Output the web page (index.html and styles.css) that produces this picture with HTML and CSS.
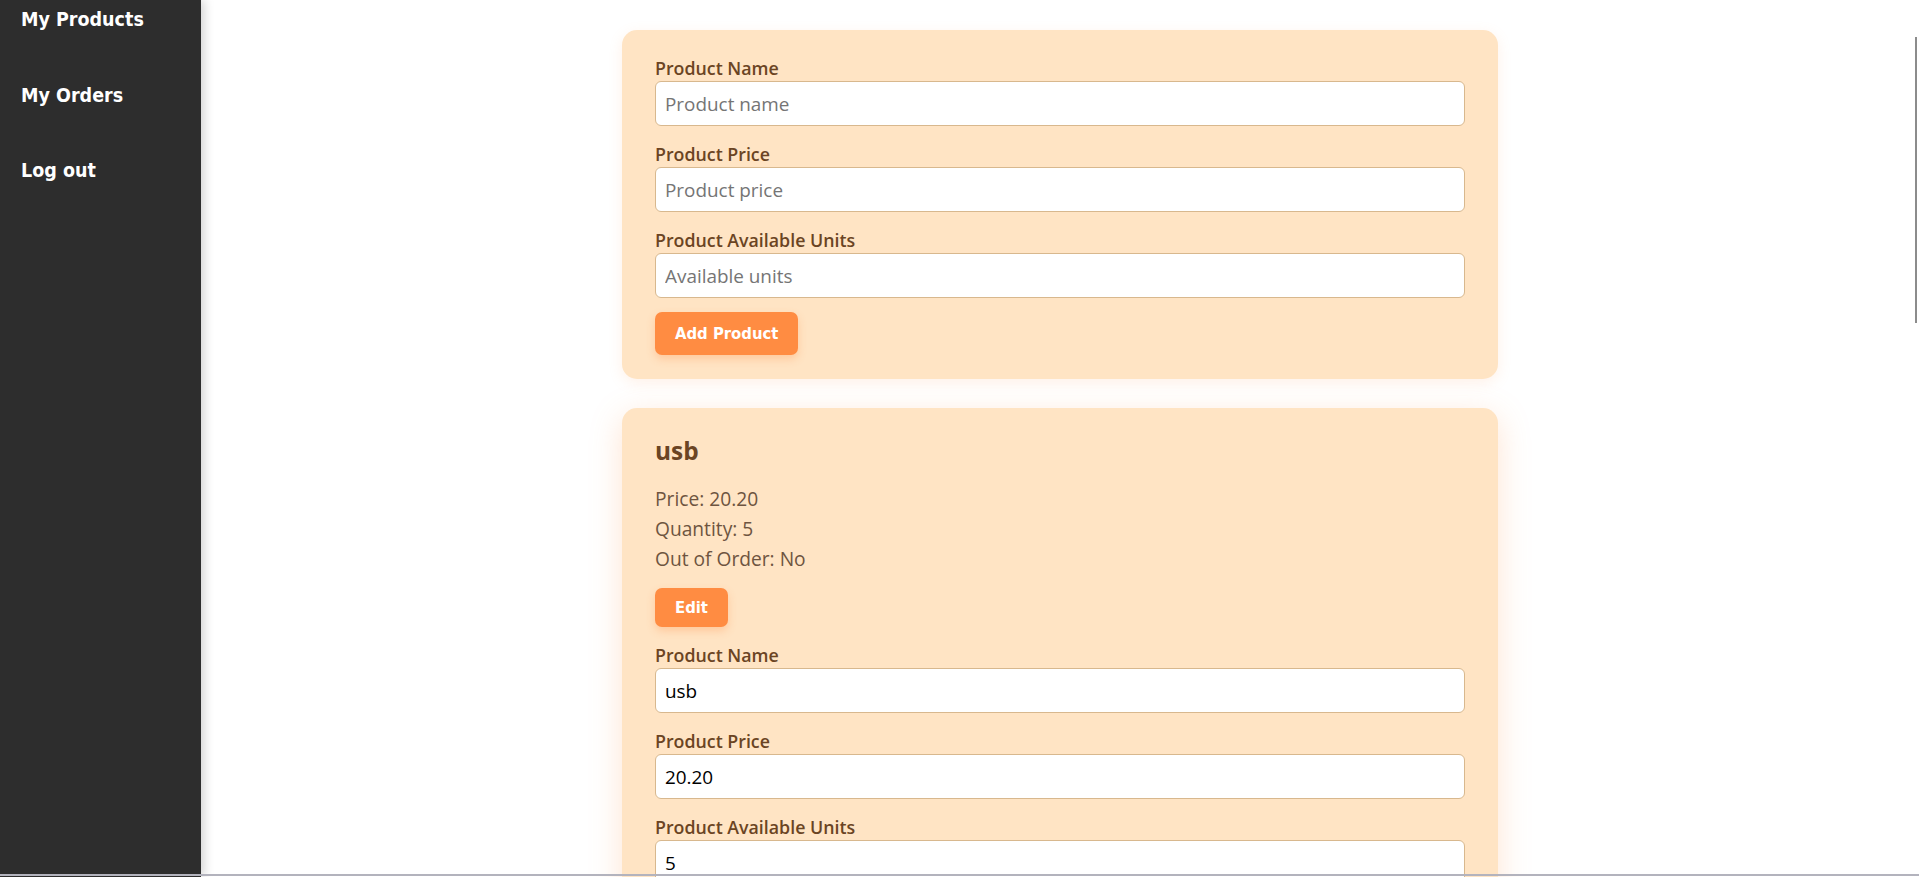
FILE: index.html
```html
<!DOCTYPE html>
<html lang="en">
<head>
<meta charset="utf-8">
<title>My Products</title>
<link rel="stylesheet" href="styles.css">
</head>
<body>
<div class="app">
  <aside class="sidebar">
    <nav class="nav">
      <a class="nav-link" href="#">My Products</a>
      <a class="nav-link" href="#">My Orders</a>
      <a class="nav-link" href="#">Log out</a>
    </nav>
  </aside>
  <main class="main">
    <form class="card">
      <div class="field">
        <label class="label">Product Name</label>
        <input class="input" type="text" placeholder="Product name">
      </div>
      <div class="field">
        <label class="label">Product Price</label>
        <input class="input" type="text" placeholder="Product price">
      </div>
      <div class="field last">
        <label class="label">Product Available Units</label>
        <input class="input" type="text" placeholder="Available units">
      </div>
      <button class="btn btn-add" type="button">Add Product</button>
    </form>

    <section class="card card-product">
      <h2 class="product-title">usb</h2>
      <div class="product-info">
        <p class="info-line">Price: 20.20</p>
        <p class="info-line">Quantity: 5</p>
        <p class="info-line">Out of Order: No</p>
      </div>
      <button class="btn btn-edit" type="button">Edit</button>
      <div class="edit-form">
        <div class="field">
          <label class="label">Product Name</label>
          <input class="input" type="text" value="usb">
        </div>
        <div class="field">
          <label class="label">Product Price</label>
          <input class="input" type="text" value="20.20">
        </div>
        <div class="field">
          <label class="label">Product Available Units</label>
          <input class="input" type="text" value="5">
        </div>
      </div>
    </section>
  </main>
  <div class="scroll-thumb"></div>
  <div class="window-edge"></div>
</div>
</body>
</html>
```
FILE: styles.css
```css
* { box-sizing: border-box; }

html, body {
  margin: 0;
  padding: 0;
  height: 877px;
  overflow: hidden;
  background: #ffffff;
}

body {
  font-family: "Open Sans", "Noto Sans", sans-serif;
}

.app {
  position: relative;
  display: flex;
  height: 877px;
}

.sidebar {
  width: 201px;
  flex: 0 0 201px;
  background: #2d2d2d;
  padding: 8px 0 0 21px;
  box-shadow: 3px 0 10px rgba(0, 0, 0, 0.18);
  position: relative;
  z-index: 2;
}

.nav {
  display: flex;
  flex-direction: column;
  gap: 51.5px;
}

.nav-link {
  font-family: "DejaVu Sans Condensed", "DejaVu Sans", sans-serif;
  font-weight: bold;
  font-size: 19.5px;
  line-height: 24px;
  color: #ffffff;
  text-decoration: none;
}

.main {
  flex: 1;
  display: flex;
  flex-direction: column;
  align-items: center;
  padding: 30px 0 0 0;
  gap: 29px;
  overflow: hidden;
}

.card {
  width: 876px;
  flex: 0 0 auto;
  background: #ffe4c4;
  border-radius: 15px;
  padding: 28px 33px 24px;
  box-shadow: 0 4px 14px rgba(255, 170, 110, 0.16);
}

.card-product {
  box-shadow: 0 8px 32px rgba(255, 150, 80, 0.26);
}

.field {
  display: flex;
  flex-direction: column;
  margin-bottom: 18px;
}

.field.last { margin-bottom: 0; }

.label {
  font-size: 17.8px;
  font-weight: 600;
  line-height: 20px;
  color: #6b4423;
  margin-bottom: 3px;
}

.input {
  height: 45px;
  width: 100%;
  border: 1px solid #d8b88e;
  border-radius: 6px;
  background: #ffffff;
  padding: 0 9px;
  font-family: "Open Sans", "Noto Sans", sans-serif;
  font-size: 18.9px;
  color: #000000;
  outline: none;
}

.input::placeholder {
  color: #757575;
}

.btn {
  display: inline-flex;
  align-items: center;
  justify-content: center;
  border: none;
  border-radius: 7px;
  background: #ff8c42;
  color: #ffffff;
  font-family: "DejaVu Sans Condensed", "DejaVu Sans", sans-serif;
  font-weight: bold;
  font-size: 16.5px;
  padding: 0 20px;
  box-shadow: 0 4px 9px rgba(255, 140, 66, 0.3);
  cursor: pointer;
}

.btn-add {
  height: 43px;
  margin-top: 14px;
}

.btn-edit {
  height: 39px;
  margin-top: 14px;
  margin-bottom: 18px;
}

.product-title {
  margin: 0 0 18px;
  font-size: 24.4px;
  line-height: 30px;
  font-weight: 700;
  color: #6b4423;
}

.product-info {
  display: flex;
  flex-direction: column;
}

.info-line {
  margin: 0;
  font-size: 19.2px;
  line-height: 30px;
  color: #6e5440;
}

.scroll-thumb {
  position: absolute;
  left: 1915px;
  top: 37px;
  width: 2px;
  height: 286px;
  background: #8c8c8c;
  z-index: 5;
}

.window-edge {
  position: absolute;
  left: 0;
  right: 0;
  bottom: 1px;
  height: 2px;
  background: #b3b3bd;
  z-index: 5;
}
```
